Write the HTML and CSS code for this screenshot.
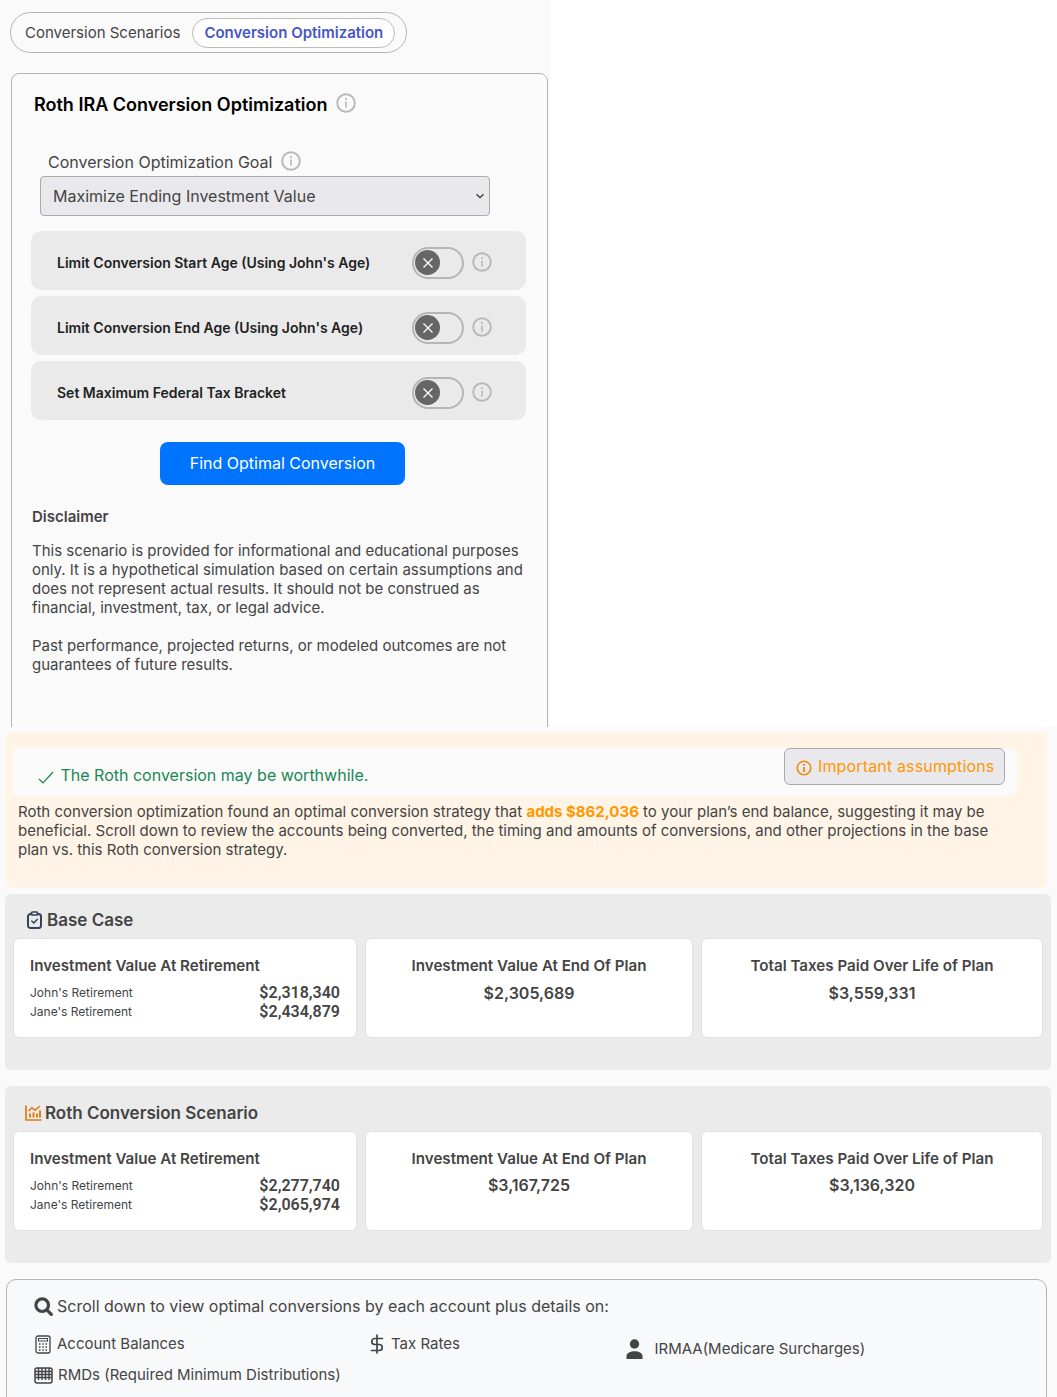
FILE: index.html
```html
<!DOCTYPE html>
<html lang="en">
<head>
    <meta charset="UTF-8">
    <title>Roth IRA Conversion Optimization</title>
    <link rel="stylesheet" href="styles.css">
</head>
<body>
    <svg class="defs" width="0" height="0">
        <symbol id="info" viewBox="0 0 20 20">
            <circle cx="10" cy="10" r="8.8" fill="none" stroke="currentColor" stroke-width="1.9"/>
            <rect x="9.2" y="8.6" width="1.6" height="6" fill="currentColor"/>
            <circle cx="10" cy="6" r="1.1" fill="currentColor"/>
        </symbol>
    </svg>

    <div class="top-pane">
        <div class="tabs">
            <span class="tab">Conversion Scenarios</span>
            <span class="tab tab-active">Conversion Optimization</span>
        </div>

        <div class="panel">
            <h2 class="panel-title">Roth IRA Conversion Optimization <svg class="info"><use href="#info"/></svg></h2>

            <div class="goal-label">Conversion Optimization Goal <svg class="info"><use href="#info"/></svg></div>
            <select class="goal-select">
                <option>Maximize Ending Investment Value</option>
            </select>

            <div class="limit-row">
                <span class="limit-text">Limit Conversion Start Age (Using John's Age)</span>
                <span class="toggle"><span class="knob"><svg width="12" height="12" viewBox="0 0 12 12"><path d="M1.5 1.5l9 9M10.5 1.5l-9 9" stroke="#fff" stroke-width="1.3"/></svg></span></span>
                <svg class="info"><use href="#info"/></svg>
            </div>
            <div class="limit-row">
                <span class="limit-text">Limit Conversion End Age (Using John's Age)</span>
                <span class="toggle"><span class="knob"><svg width="12" height="12" viewBox="0 0 12 12"><path d="M1.5 1.5l9 9M10.5 1.5l-9 9" stroke="#fff" stroke-width="1.3"/></svg></span></span>
                <svg class="info"><use href="#info"/></svg>
            </div>
            <div class="limit-row">
                <span class="limit-text">Set Maximum Federal Tax Bracket</span>
                <span class="toggle"><span class="knob"><svg width="12" height="12" viewBox="0 0 12 12"><path d="M1.5 1.5l9 9M10.5 1.5l-9 9" stroke="#fff" stroke-width="1.3"/></svg></span></span>
                <svg class="info"><use href="#info"/></svg>
            </div>

            <button class="btn-find">Find Optimal Conversion</button>

            <h3 class="disclaimer-title">Disclaimer</h3>
            <p class="disclaimer">This scenario is provided for informational and educational purposes only. It is a hypothetical simulation based on certain assumptions and does not represent actual results. It should not be construed as financial, investment, tax, or legal advice.</p>
            <p class="disclaimer">Past performance, projected returns, or modeled outcomes are not guarantees of future results.</p>
        </div>
    </div>

    <div class="results">
        <div class="verdict">
            <div class="verdict-head">
                <span class="verdict-text">
                    <svg width="16" height="13" viewBox="0 0 16 13"><path d="M1 8l4 4L15 1" fill="none" stroke="#198754" stroke-width="1.2"/></svg>
                    The Roth conversion may be worthwhile.
                </span>
                <button class="btn-assumptions">
                    <svg class="info-orange" width="16" height="16" viewBox="0 0 16 16"><circle cx="8" cy="8" r="6.8" fill="none" stroke="currentColor" stroke-width="1.6"/><rect x="7.1" y="7" width="1.8" height="5" fill="currentColor"/><circle cx="8" cy="4.800" r="1.100" fill="currentColor"/></svg>
                    Important assumptions
                </button>
            </div>
            <p class="verdict-body">Roth conversion optimization found an optimal conversion strategy that <strong>adds $862,036</strong> to your plan’s end balance, suggesting it may be beneficial. Scroll down to review the accounts being converted, the timing and amounts of conversions, and other projections in the base plan vs. this Roth conversion strategy.</p>
        </div>

        <section class="scenario">
            <h3 class="scenario-title">
                <svg width="15" height="18" viewBox="0 0 15 18" fill="none" stroke="#33445c" stroke-width="2" stroke-linejoin="round" stroke-linecap="round"><path d="M4.500 3H3.500A2.500 2.500 0 0 0 1 5.500v9A2.500 2.500 0 0 0 3.500 17h8a2.500 2.500 0 0 0 2.500-2.500v-9A2.500 2.500 0 0 0 11.500 3h-1"/><rect x="4.500" y="1" width="6" height="3" rx="0.800" stroke-width="1.600"/><path d="M4.800 10l2 2 3.400-3.600" stroke-width="1.500"/></svg>
                Base Case
            </h3>
            <div class="cards">
                <div class="card">
                    <div class="card-title">Investment Value At Retirement</div>
                    <div class="ret-row"><span>John's Retirement</span><b>$2,318,340</b></div>
                    <div class="ret-row"><span>Jane's Retirement</span><b>$2,434,879</b></div>
                </div>
                <div class="card card-center">
                    <div class="card-title">Investment Value At End Of Plan</div>
                    <b class="card-value">$2,305,689</b>
                </div>
                <div class="card card-center">
                    <div class="card-title">Total Taxes Paid Over Life of Plan</div>
                    <b class="card-value">$3,559,331</b>
                </div>
            </div>
        </section>

        <section class="scenario">
            <h3 class="scenario-title title-tight">
                <svg width="17" height="16" viewBox="0 0 17 16" fill="none" stroke="#e07b12" stroke-width="1.700"><path d="M1 0.500V15H16.500"/><path d="M3.500 6L7 2.800l3 2.500L15 1" stroke-width="1.500"/><path d="M5 12.500V8.500M8.500 12.500V7.500M12 12.500V8.500M15 12.500V5.500" stroke-width="1.900"/></svg>
                Roth Conversion Scenario
            </h3>
            <div class="cards">
                <div class="card">
                    <div class="card-title">Investment Value At Retirement</div>
                    <div class="ret-row"><span>John's Retirement</span><b>$2,277,740</b></div>
                    <div class="ret-row"><span>Jane's Retirement</span><b>$2,065,974</b></div>
                </div>
                <div class="card card-center">
                    <div class="card-title title-close">Investment Value At End Of Plan</div>
                    <b class="card-value">$3,167,725</b>
                </div>
                <div class="card card-center">
                    <div class="card-title title-close">Total Taxes Paid Over Life of Plan</div>
                    <b class="card-value">$3,136,320</b>
                </div>
            </div>
        </section>

        <div class="scroll-box">
            <div class="scroll-head">
                <svg width="19" height="19" viewBox="0 0 19 19" fill="none" stroke="#444" stroke-width="3.200"><circle cx="8.200" cy="8.200" r="6.300"/><path d="M12.800 12.800L17.300 17.300" stroke-linecap="round"/></svg>
                Scroll down to view optimal conversions by each account plus details on:
            </div>
            <div class="scroll-list">
                <span class="scroll-item item-balances">
                    <svg width="16" height="19" viewBox="0 0 16 19" fill="none" stroke="#444"><rect x="1" y="1" width="14" height="17" rx="2" stroke-width="1.300"/><rect x="3.500" y="3.500" width="9" height="2.500" stroke-width="1"/><path d="M4 9h1.500M7.200 9h1.500M10.500 9H12M4 12h1.500M7.200 12h1.500M10.500 12H12M4 15h1.500M7.200 15h1.500M10.500 15H12" stroke-width="1.300"/></svg>
                    Account Balances
                </span>
                <span class="scroll-item item-tax">
                    <svg width="14" height="20" viewBox="0 0 14 20" fill="none" stroke="#444" stroke-width="1.700" stroke-linecap="round"><path d="M7 1v18"/><path d="M12.500 4.500H4.800a3 3 0 0 0 0 6h4.400a3 3 0 0 1 0 6H1.500"/></svg>
                    Tax Rates
                </span>
                <span class="scroll-item item-irmaa">
                    <svg width="17" height="20" viewBox="0 0 17 20" fill="#444"><circle cx="8.500" cy="5" r="4.700"/><path d="M0.500 20v-3c0-3 4-4.800 8-4.800s8 1.800 8 4.800v3z"/></svg>
                    IRMAA(Medicare Surcharges)
                </span>
                <span class="scroll-item item-rmds">
                    <svg width="19" height="17" viewBox="0 0 19 17" fill="none" stroke="#444"><rect x="1" y="1" width="17" height="15" rx="2" stroke-width="1.500"/><path d="M1 4.500h17M1 7.500h17M1 10.500h17M4.500 1v12M8 1v12M11.500 1v12M15 1v12" stroke-width="1.400"/></svg>
                    RMDs (Required Minimum Distributions)
                </span>
            </div>
        </div>
    </div>
</body>
</html>
```

FILE: styles.css
```css
* {
    box-sizing: border-box;
}

html, body {
    height: 100%;
}

body {
    margin: 0;
    font-family: Inter, "Noto Sans", sans-serif;
    color: #444;
    background-color: #fff;
    overflow: hidden;
}

.defs {
    display: block;
    height: 0;
}

.info {
    width: 20px;
    height: 20px;
    color: #b8b8b8;
    flex: none;
    vertical-align: top;
}

/* top half, only as wide as the left column */
.top-pane {
    width: 550px;
    height: 727px;
    padding: 12px 0 0 10px;
    background-color: #fafafa;
    overflow: hidden;
}

.tabs {
    display: inline-flex;
    align-items: center;
    gap: 4px;
    height: 41px;
    padding: 0 11px 0 14px;
    border: 1px solid #b5b5b5;
    border-radius: 21px;
    font-size: 15px;
}

.tab {
    margin-right: 8px;
}

.tab-active {
    margin: 0;
    padding: 4px 11px 5px 11px;
    border: 1px solid #bbb;
    border-radius: 16px;
    color: #4655c9;
    font-weight: 600;
    background-color: #fff;
}

.panel {
    width: 537px;
    height: 700px;
    margin: 20px 0 0 1px;
    padding: 20px 21px 0 19px;
    border: 1px solid #b5b5b5;
    border-radius: 8px;
}

.panel-title {
    margin: 0 0 0 3px;
    font-size: 18px;
    line-height: 22px;
    font-weight: 600;
    color: #000;
}

.panel-title .info {
    margin: -1px 0 0 4px;
}

.goal-label {
    margin: 36px 0 0 17px;
    font-size: 16px;
    line-height: 20px;
    height: 24px;
}

.goal-label .info {
    margin: -1px 0 0 4px;
}

.goal-select {
    display: block;
    width: 450px;
    height: 40px;
    margin: 0 0 15px 9px;
    padding: 0 12px;
    font-family: inherit;
    font-size: 16px;
    color: #444;
    background: #e9e9ed url("data:image/svg+xml,%3Csvg xmlns='http://www.w3.org/2000/svg' width='10' height='6' viewBox='0 0 10 6'%3E%3Cpath d='M1.500 1.200L5 4.600l3.500-3.400' fill='none' stroke='%23333' stroke-width='1.300'/%3E%3C/svg%3E") no-repeat right 4px center;
    border: 1px solid #aaa;
    border-radius: 4px;
    appearance: none;
}

.limit-row {
    display: flex;
    align-items: center;
    width: 495px;
    height: 59px;
    margin-bottom: 6px;
    padding: 4px 34px 0 26px;
    background-color: #eaeaea;
    border-radius: 10px;
}

.limit-text {
    flex: 1;
    font-size: 14px;
    font-weight: 600;
    color: #222;
}

.limit-row .info {
    margin-bottom: 2px;
}

.toggle {
    display: flex;
    align-items: center;
    width: 52px;
    height: 32px;
    margin-right: 8px;
    padding-left: 1px;
    border: 2px solid #b5b5b5;
    border-radius: 16px;
}

.knob {
    display: flex;
    align-items: center;
    justify-content: center;
    width: 25px;
    height: 25px;
    border-radius: 50%;
    background-color: #666;
}

.btn-find {
    display: block;
    width: 245px;
    height: 43px;
    margin: 22px 0 0 129px;
    padding: 0 0 2px;
    font-family: inherit;
    font-size: 16px;
    color: #fff;
    background-color: #0073ff;
    border: none;
    border-radius: 8px;
}

.disclaimer-title {
    margin: 22px 0 0 1px;
    font-size: 15px;
    line-height: 20px;
    font-weight: 600;
}

.disclaimer {
    width: 495px;
    margin: 19px 0 0 1px;
    font-size: 15px;
    line-height: 19px;
}

.disclaimer-title + .disclaimer {
    margin-top: 14px;
}

/* full width results */
.results {
    height: 670px;
    padding: 5px 6px 0 5px;
    background-color: #fafafa;
}

.verdict {
    width: 1042px;
    height: 156px;
    padding: 16px 0 0 7px;
    background-color: #fff4e6;
    border-radius: 8px;
}

.verdict-head {
    display: flex;
    justify-content: space-between;
    align-items: flex-start;
    width: 1005px;
    height: 48px;
    padding: 0 12px 0 26px;
    background-color: #fafafa;
    border-radius: 8px;
}

.verdict-text {
    margin-top: 17px;
    font-size: 16px;
    line-height: 20px;
    color: #198754;
}

.verdict-text svg {
    margin-right: 2px;
    vertical-align: -3px;
}

.btn-assumptions {
    display: flex;
    align-items: center;
    gap: 6px;
    width: 221px;
    height: 37px;
    padding: 0 0 2px 11px;
    font-family: inherit;
    font-size: 16px;
    letter-spacing: 0.15px;
    white-space: nowrap;
    color: #ff9800;
    background-color: #e9e9ed;
    border: 1px solid #aaa;
    border-radius: 6px;
}

.info-orange {
    color: #ef8a0a;
    flex: none;
    margin-top: 5px;
}

.verdict-body {
    width: 990px;
    margin: 6px 0 0 6px;
    font-size: 15px;
    line-height: 19px;
}

.verdict-body strong {
    color: #ff9800;
    font-weight: 700;
}

.scenario {
    width: 1046px;
    height: 176px;
    margin-top: 6px;
    padding: 15px 8px 0 8px;
    background-color: #ebebeb;
    border-radius: 6px;
}

.scenario + .scenario {
    height: 177px;
    margin-top: 16px;
}

.scenario-title {
    display: flex;
    align-items: center;
    gap: 5px;
    height: 22px;
    margin: 0 0 7px 14px;
    font-size: 17px;
    font-weight: 600;
}

.title-tight {
    gap: 3px;
    margin: 1px 0 7px 12px;
}

.cards {
    display: grid;
    grid-template-columns: 344px 328px 342px;
    gap: 8px;
}

.card {
    height: 100px;
    padding: 18px 16px 0 16px;
    background-color: #fff;
    border: 1px solid #e0e0e6;
    border-radius: 6px;
}

.card-center {
    text-align: center;
}

.card-title {
    margin-bottom: 8px;
    font-size: 15.15px;
    line-height: 18px;
    font-weight: 600;
}

.title-close {
    margin-bottom: 7px;
}

.card-value {
    font-size: 16px;
    line-height: 20px;
    font-weight: 600;
}

.ret-row {
    display: flex;
    justify-content: space-between;
    align-items: center;
    height: 19px;
    font-size: 12px;
}

.ret-row b {
    font-family: Roboto, sans-serif;
    font-size: 16px;
    font-weight: 600;
}

.scroll-box {
    width: 1041px;
    height: 130px;
    margin: 16px 0 0 1px;
    padding: 16px 27px 0;
    background-color: #f8f9fb;
    border: 1px solid #b5b5b5;
    border-radius: 10px;
}

.scroll-head {
    display: flex;
    align-items: center;
    gap: 4px;
    font-size: 16px;
    line-height: 20px;
}

.scroll-list {
    display: grid;
    grid-template-columns: 335px 256px 1fr;
    margin-top: 18px;
}

.scroll-item {
    display: flex;
    align-items: center;
    align-self: start;
    font-size: 15px;
    line-height: 20px;
    gap: 6px;
}

.item-balances {
    padding-left: 1px;
}

.item-tax {
    gap: 7px;
    padding-left: 1px;
}

.item-irmaa {
    gap: 11.5px;
    margin-top: 5px;
    padding-left: 1px;
}

.item-rmds {
    grid-column: 1 / span 3;
    gap: 5px;
    margin-top: 6px;
}
```
